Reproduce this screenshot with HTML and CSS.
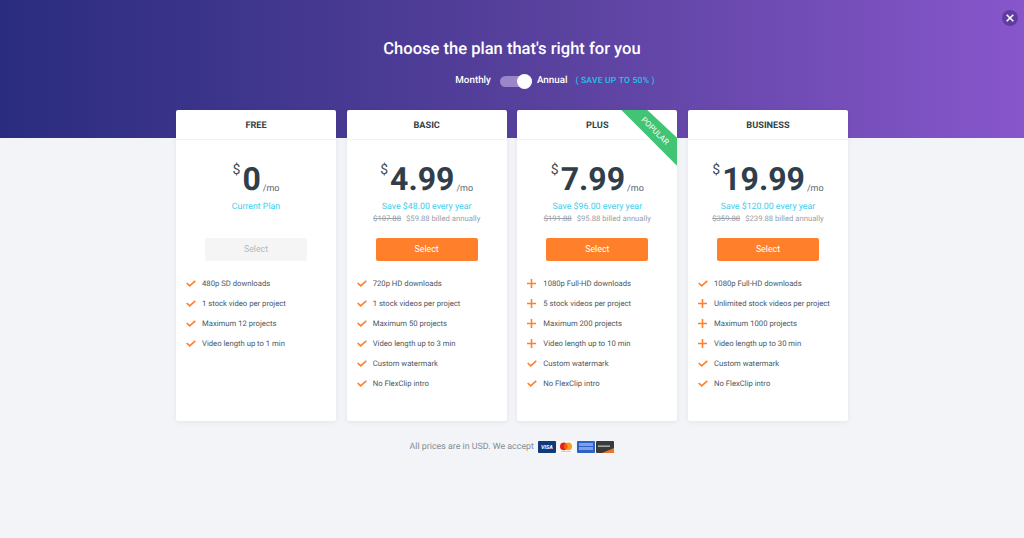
FILE: index.html
```html
<!DOCTYPE html>
<html lang="en">
<head>
<meta charset="utf-8">
<title>Choose the plan</title>
<link rel="stylesheet" href="styles.css">
</head>
<body>
<svg class="defs" width="0" height="0" aria-hidden="true">
  <symbol id="check" viewBox="0 0 10 7"><path d="M.7 3l3 2.8L9.3.8" fill="none" stroke="#ff7f2a" stroke-width="1.6"/></symbol>
  <symbol id="plus" viewBox="0 0 9 9"><path d="M4.5 0v9M0 4.5h9" fill="none" stroke="#ff7f2a" stroke-width="1.6"/></symbol>
</svg>
<header class="hero">
  <button class="close" aria-label="Close"><svg width="8" height="8" viewBox="0 0 8 8"><path d="M.7.7l6.6 6.6M7.3.7L.7 7.3" stroke="#fff" stroke-width="1.6"/></svg></button>
  <h1 class="title">Choose the plan that's right for you</h1>
  <div class="billing">
    <span class="billing-label">Monthly</span>
    <span class="switch"><span class="knob"></span></span>
    <span class="billing-label">Annual</span>
    <span class="save">( SAVE UP TO 50% )</span>
  </div>
</header>
<main class="plans">
  <section class="card">
    <h2 class="card-name">FREE</h2>
    <div class="price"><span class="cur">$</span><span class="amount">0</span><span class="per">/mo</span></div>
    <p class="save-line">Current Plan</p>
    <p class="bill">&nbsp;</p>
    <button class="select disabled">Select</button>
    <ul class="features">
      <li><svg class="ic"><use href="#check"/></svg>480p SD downloads</li>
      <li><svg class="ic"><use href="#check"/></svg>1 stock video per project</li>
      <li><svg class="ic"><use href="#check"/></svg>Maximum 12 projects</li>
      <li><svg class="ic"><use href="#check"/></svg>Video length up to 1 min</li>
    </ul>
  </section>
  <section class="card">
    <h2 class="card-name">BASIC</h2>
    <div class="price"><span class="cur">$</span><span class="amount">4.99</span><span class="per">/mo</span></div>
    <p class="save-line">Save $48.00 every year</p>
    <p class="bill"><s>$107.88</s><span>$59.88 billed annually</span></p>
    <button class="select">Select</button>
    <ul class="features">
      <li><svg class="ic"><use href="#check"/></svg>720p HD downloads</li>
      <li><svg class="ic"><use href="#check"/></svg>1 stock videos per project</li>
      <li><svg class="ic"><use href="#check"/></svg>Maximum 50 projects</li>
      <li><svg class="ic"><use href="#check"/></svg>Video length up to 3 min</li>
      <li><svg class="ic"><use href="#check"/></svg>Custom watermark</li>
      <li><svg class="ic"><use href="#check"/></svg>No FlexClip intro</li>
    </ul>
  </section>
  <section class="card">
    <h2 class="card-name">PLUS</h2>
    <div class="ribbon"><span class="ribbon-text">POPULAR</span></div>
    <div class="price"><span class="cur">$</span><span class="amount">7.99</span><span class="per">/mo</span></div>
    <p class="save-line">Save $96.00 every year</p>
    <p class="bill"><s>$191.88</s><span>$95.88 billed annually</span></p>
    <button class="select">Select</button>
    <ul class="features">
      <li><svg class="ic plus"><use href="#plus"/></svg>1080p Full-HD downloads</li>
      <li><svg class="ic plus"><use href="#plus"/></svg>5 stock videos per project</li>
      <li><svg class="ic plus"><use href="#plus"/></svg>Maximum 200 projects</li>
      <li><svg class="ic plus"><use href="#plus"/></svg>Video length up to 10 min</li>
      <li><svg class="ic"><use href="#check"/></svg>Custom watermark</li>
      <li><svg class="ic"><use href="#check"/></svg>No FlexClip intro</li>
    </ul>
  </section>
  <section class="card">
    <h2 class="card-name">BUSINESS</h2>
    <div class="price"><span class="cur">$</span><span class="amount">19.99</span><span class="per">/mo</span></div>
    <p class="save-line">Save $120.00 every year</p>
    <p class="bill"><s>$359.88</s><span>$239.88 billed annually</span></p>
    <button class="select">Select</button>
    <ul class="features">
      <li><svg class="ic"><use href="#check"/></svg>1080p Full-HD downloads</li>
      <li><svg class="ic plus"><use href="#plus"/></svg>Unlimited stock videos per project</li>
      <li><svg class="ic plus"><use href="#plus"/></svg>Maximum 1000 projects</li>
      <li><svg class="ic plus"><use href="#plus"/></svg>Video length up to 30 min</li>
      <li><svg class="ic"><use href="#check"/></svg>Custom watermark</li>
      <li><svg class="ic"><use href="#check"/></svg>No FlexClip intro</li>
    </ul>
  </section>
</main>
<footer class="foot">
  <span>All prices are in USD. We accept</span>
  <span class="pay">
    <svg class="pay-card" viewBox="0 0 18 12"><rect width="18" height="12" rx="1" fill="#11397f"/><text class="visa" x="9" y="8.4" text-anchor="middle">VISA</text></svg>
    <svg class="pay-card" viewBox="0 0 18 12"><rect width="18" height="12" rx="1" fill="#fafafa"/><circle cx="6.8" cy="5.4" r="3.8" fill="#e2231a"/><circle cx="11.2" cy="5.4" r="3.8" fill="#f79e1b"/><path d="M9 2.3a3.8 3.8 0 0 1 0 6.2a3.8 3.8 0 0 1 0-6.2z" fill="#f5590f"/><rect x="4" y="10" width="10" height="1" fill="#ccc"/></svg>
    <svg class="pay-card" viewBox="0 0 18 12"><rect width="18" height="12" rx="1" fill="#2c62c9"/><rect x="2" y="2" width="14" height="3" fill="#7f9fe0"/><rect x="2" y="6" width="14" height="3" fill="#7f9fe0"/></svg>
    <svg class="pay-card" viewBox="0 0 18 12"><rect width="18" height="12" rx="1" fill="#3a3a3a"/><path d="M6 12L18 7v4a1 1 0 0 1-1 1z" fill="#e8762b"/><rect x="2" y="4.4" width="12" height="1.6" fill="#a5a5a5"/></svg>
  </span>
</footer>
</body>
</html>
```
FILE: styles.css
```css
* { box-sizing: border-box; }
html, body { height: 100%; }
body {
  margin: 0;
  background: #f3f4f8;
  font-family: Roboto, "Liberation Sans", sans-serif;
  color: #333f48;
  overflow: hidden;
  text-rendering: geometricPrecision;
}
.defs { position: absolute; }
.hero {
  position: relative;
  height: 138px;
  padding-top: 39px;
  background: linear-gradient(90deg, #2a2c80 0%, #5a429f 55%, #8756cb 100%);
  color: #fff;
  text-align: center;
}
.close {
  position: absolute;
  top: 10px;
  right: 6px;
  width: 16px;
  height: 16px;
  padding: 0;
  border: 0;
  border-radius: 50%;
  background: rgba(50, 30, 110, .45);
  display: flex;
  align-items: center;
  justify-content: center;
}
.title {
  margin: 0;
  font-size: 16.55px;
  line-height: 22px;
  font-weight: 500;
}
.billing {
  margin-top: 12px;
  padding-left: 86px;
  display: flex;
  justify-content: center;
  align-items: center;
  height: 16px;
  font-size: 9.8px;
  font-weight: 500;
}
.billing-label { line-height: 16px; }
.switch {
  position: relative;
  width: 32px;
  height: 11px;
  margin: 0 5px 0 9px;
  border-radius: 6px;
  background: #9a86c8;
}
.knob {
  position: absolute;
  right: 0;
  top: -2px;
  width: 15px;
  height: 15px;
  border-radius: 50%;
  background: #fff;
}
.save {
  margin-left: 8px;
  color: #22c3ea;
  font-size: 8.6px;
  letter-spacing: .2px;
}
.plans {
  display: flex;
  justify-content: center;
  gap: 10.67px;
  margin-top: -28px;
}
.card {
  position: relative;
  width: 160px;
  height: 311px;
  background: #fff;
  border-radius: 2px;
  box-shadow: 0 1px 4px rgba(40, 50, 80, .08);
  overflow: hidden;
  text-align: center;
}
.card-name {
  margin: 0;
  height: 30px;
  line-height: 31px;
  font-size: 9.2px;
  font-weight: 700;
  border-bottom: 1px solid #f2f3f6;
  color: #333f48;
}
.ribbon {
  position: absolute;
  top: 0;
  right: 0;
  width: 56px;
  height: 56px;
  background: #41c473;
  clip-path: polygon(0 0, 26px 0, 100% 28px, 100% 100%);
}
.ribbon-text {
  position: absolute;
  top: 21px;
  left: 34px;
  font-size: 8px;
  color: #fff;
  transform: translate(-50%, -50%) rotate(45deg);
}
.price {
  display: flex;
  justify-content: center;
  align-items: flex-start;
  height: 38px;
  margin-top: 20px;
}
.cur { font-size: 14px; line-height: 14px; margin: 3px 2px 0 0; color: #3d4a54; }
.amount { font-size: 32px; line-height: 38px; font-weight: 700; color: #2f3e4a; }
.per { font-size: 9px; margin: 23px 0 0 2px; line-height: 12px; color: #5b6670; }
.save-line {
  margin: 3px 0 0;
  font-size: 8.8px;
  line-height: 12px;
  color: #3fcdec;
}
.bill {
  margin: 0;
  height: 12px;
  font-size: 7.7px;
  line-height: 12px;
  color: #9aa1a8;
}
.bill span { margin-left: 5px; }
.select {
  display: block;
  width: 102px;
  height: 23px;
  margin: 13px auto 0;
  border: 0;
  border-radius: 2px;
  background: #ff7f2a;
  color: #fff;
  font: 400 8.8px/21px Roboto, sans-serif;
}
.select.disabled { background: #f5f5f5; color: #b3b8bd; }
.features {
  list-style: none;
  margin: 12px 0 0;
  padding: 0 0 0 10px;
  text-align: left;
}
.features li {
  display: flex;
  align-items: center;
  height: 20px;
  font-size: 7.7px;
  color: #4a555e;
}
.ic { width: 10px; height: 7px; margin-right: 6px; flex: none; }
.ic.plus { width: 9px; height: 9px; margin-right: 7px; }
.foot {
  margin-top: 19px;
  display: flex;
  justify-content: center;
  align-items: center;
  gap: 4px;
  height: 14px;
  font-size: 8.85px;
  color: #858c93;
}
.pay { display: flex; gap: 1.5px; }
.pay-card { width: 18px; height: 12px; display: block; }
.visa { fill: #fff; font: italic 700 5.5px Roboto, sans-serif; }
```
